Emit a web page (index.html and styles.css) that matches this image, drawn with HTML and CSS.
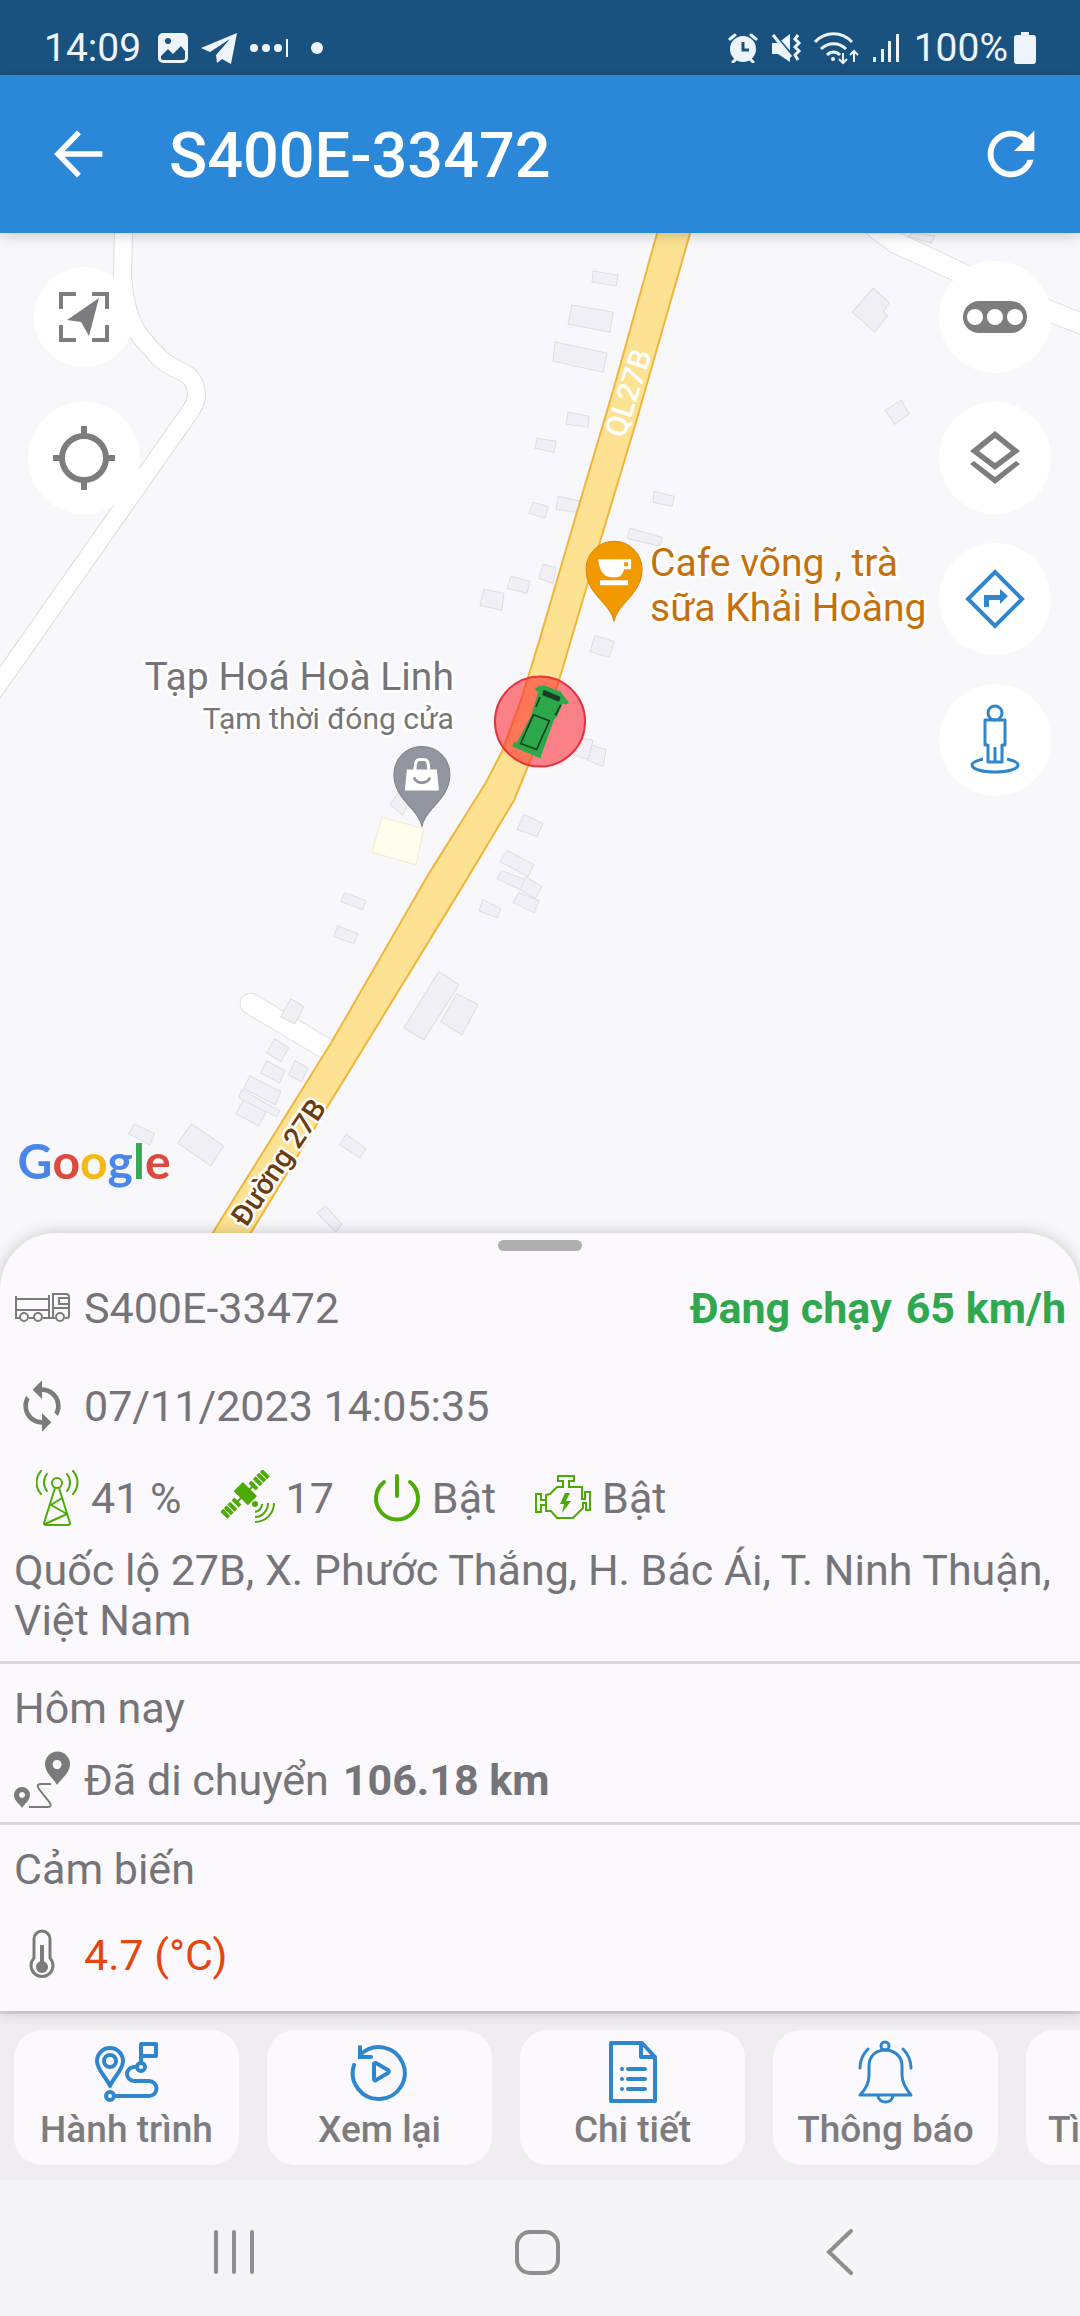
FILE: index.html
```html
<!DOCTYPE html>
<html lang="vi">
<head>
    <meta charset="UTF-8">
    <meta name="viewport" content="width=device-width, initial-scale=1.0">
    <title>S400E-33472</title>
    <link rel="stylesheet" href="styles.css">
</head>
<body>
    <div class="status-bar">
        <div class="status-group">
            <span class="status-time">14:09</span>
            <svg class="status-picture" width="32" height="32" viewBox="0 0 32 32">
                <rect x="1" y="1" width="30" height="30" rx="5" fill="#eef4fb"/>
                <circle cx="11" cy="9" r="3" fill="#1a527f"/>
                <path d="M4 24l7-7 5 5 8-8 4 5v7c0 1-1 2-2 2H6c-1 0-2-1-2-2z" fill="#1a527f"/>
            </svg>
            <svg width="36" height="32" viewBox="0 0 36 32">
                <path d="M0 16L36 1l-6 31-9-5-5 4-1-8 14-16L9 20z" fill="#eef4fb"/>
            </svg>
            <svg width="42" height="20" viewBox="0 0 42 20">
                <g fill="#eef4fb"><circle cx="5" cy="10" r="4"/><circle cx="17" cy="10" r="4"/><circle cx="29" cy="10" r="4"/><rect x="37" y="1" width="2" height="18"/></g>
            </svg>
            <span class="status-dot"></span>
        </div>
        <div class="status-group">
            <svg width="30" height="30" viewBox="0 0 30 30">
                <path d="M2 6l5-4M28 6l-5-4M5 29l4-4M25 29l-4-4" stroke="#eef4fb" stroke-width="3" stroke-linecap="round"/>
                <circle cx="15" cy="16" r="13" fill="#eef4fb"/>
                <path d="M15 9v8h6" fill="none" stroke="#1a527f" stroke-width="3"/>
            </svg>
            <svg width="32" height="32" viewBox="0 0 32 32">
                <path d="M2 11h6l12-9v28L8 22H2z" fill="#eef4fb"/>
                <path d="M2 0l24 28" stroke="#1a527f" stroke-width="3"/>
                <path d="M3 3l18 22" stroke="#eef4fb" stroke-width="3"/>
                <path d="M28 3l-3 4 4 4-4 4 4 4-4 4 3 5" fill="none" stroke="#eef4fb" stroke-width="3"/>
            </svg>
            <svg width="46" height="34" viewBox="0 0 46 34">
                <g fill="none" stroke="#eef4fb" stroke-width="3">
                    <path d="M1 11c10-11 27-11 37 0M7 18c7-7 18-7 25 0M13 24c4-4 9-4 13 0"/>
                    <path d="M29 22v10M25 28l4 4 4-4M40 31V20M36 24l4-4 4 4" stroke-width="2"/>
                </g>
                <circle cx="19" cy="28" r="2" fill="#eef4fb"/>
            </svg>
            <svg width="30" height="32" viewBox="0 0 30 32">
                <g fill="#eef4fb"><rect x="1" y="25" width="3" height="5"/><rect x="9" y="17" width="3" height="13"/><rect x="16" y="9" width="3" height="21"/><rect x="24" y="2" width="3" height="28"/></g>
            </svg>
            <span class="status-percent">100%</span>
            <svg width="22" height="34" viewBox="0 0 22 34">
                <path d="M7 1h8v3h4c2 0 3 1 3 3v23c0 2-1 3-3 3H3c-2 0-3-1-3-3V7c0-2 1-3 3-3h4z" fill="#eef4fb"/>
            </svg>
        </div>
    </div>

    <header class="app-bar">
        <button type="button" class="icon-button" aria-label="Quay lại">
            <svg width="70" height="70" viewBox="0 0 24 24">
                <path d="M20 12H5M12 4.600L4.800 12l7.200 7.400" fill="none" stroke="#fff" stroke-width="1.900"/>
            </svg>
        </button>
        <h1>S400E-33472</h1>
        <button type="button" class="icon-button" aria-label="Tải lại">
            <svg width="70" height="70" viewBox="0 0 24 24">
                <path d="M17.65 6.35C16.2 4.9 14.21 4 12 4c-4.42 0-7.99 3.58-7.99 8s3.57 8 7.99 8c3.73 0 6.84-2.55 7.73-6h-2.08c-.82 2.33-3.04 4-5.65 4-3.31 0-6-2.69-6-6s2.69-6 6-6c1.66 0 3.14.69 4.22 1.78L13 11h7V4l-2.35 2.35z" fill="#fff"/>
            </svg>
        </button>
    </header>

    <main class="map">
        <svg class="map-canvas" viewBox="0 233 1080 1055" preserveAspectRatio="xMidYMin slice">
            <!-- side roads -->
            <g fill="none" stroke-linecap="round">
                <path d="M124 220L123 275C124 300 130 322 142 338L160 358C172 370 190 370 195 385C199 396 196 403 190 412L-10 697" stroke="#dadce3" stroke-width="19"/>
                <path d="M124 220L123 275C124 300 130 322 142 338L160 358C172 370 190 370 195 385C199 396 196 403 190 412L-10 697" stroke="#fff" stroke-width="17"/>
                <path d="M251 1003L340 1056" stroke="#e0e2e8" stroke-width="22"/>
                <path d="M251 1003L340 1056" stroke="#fff" stroke-width="20"/>
            </g>
            <polygon points="865,233 890,252 951,280 1053,324 1082,335 1082,313 1050,300 970,266 900,233" fill="#fff" stroke="#dfe1e8"/>

            <!-- buildings -->
            <g fill="#f1f1f5" stroke="#dcdde3">
                <polygon points="593,271 618,275 616,286 592,282"/>
                <polygon points="572,305 613,312 610,332 568,324"/>
                <polygon points="555,342 607,353 603,372 553,361"/>
                <polygon points="568,412 589,416 588,427 566,424"/>
                <polygon points="537,438 556,441 554,452 535,448"/>
                <polygon points="558,496 580,501 578,512 556,509"/>
                <polygon points="533,502 548,506 545,518 529,513"/>
                <polygon points="654,491 674,496 672,506 653,502"/>
                <polygon points="630,528 662,537 660,546 627,538"/>
                <polygon points="543,564 556,567 553,583 539,578"/>
                <polygon points="511,576 530,581 527,593 507,588"/>
                <polygon points="484,589 504,593 502,610 480,605"/>
                <polygon points="595,635 614,641 609,657 590,651"/>
                <polygon points="582,738 593,740 588,759 573,754"/>
                <polygon points="592,745 606,749 603,766 588,760"/>
                <polygon points="873,288 889,303 883,311 887,316 874,332 852,312"/>
                <polygon points="901,400 909,414 894,424 885,410"/>
                <polygon points="912,233 935,236 931,243 908,237"/>
                <polygon points="399,792 411,796 403,815 390,804"/>
                <polygon points="524,814 543,823 537,836 517,829"/>
                <polygon points="507,850 534,864 528,876 500,861"/>
                <polygon points="502,870 525,879 520,889 497,878"/>
                <polygon points="526,876 542,886 535,898 520,889"/>
                <polygon points="519,892 539,900 534,912 513,902"/>
                <polygon points="483,899 501,908 497,917 479,910"/>
                <polygon points="345,892 366,900 363,909 341,901"/>
                <polygon points="338,925 358,933 354,943 334,936"/>
                <polygon points="439,971 459,984 424,1039 404,1027"/>
                <polygon points="457,993 478,1004 462,1034 441,1021"/>
                <polygon points="291,998 304,1006 295,1023 281,1016"/>
                <polygon points="275,1038 289,1047 281,1061 267,1052"/>
                <polygon points="267,1060 285,1070 280,1082 261,1072"/>
                <polygon points="295,1060 308,1067 302,1081 289,1074"/>
                <polygon points="250,1075 281,1091 276,1104 244,1088"/>
                <polygon points="244,1099 267,1110 259,1125 236,1113"/>
                <polygon points="242,1089 280,1110 277,1116 239,1097"/>
                <polygon points="192,1123 224,1145 211,1165 178,1142"/>
                <polygon points="135,1123 155,1133 150,1144 129,1133"/>
                <polygon points="346,1133 366,1148 360,1157 340,1144"/>
                <polygon points="326,1205 342,1223 336,1231 317,1212"/>
            </g>
            <polygon points="382,817 424,828 416,864 372,852" fill="#fffdee" stroke="#f3ecc4"/>

            <!-- highway -->
            <polygon points="662,216 657,233 614,387 576,515 540,638 521,700 502,751 486,782 429,873 332,1041 213,1232 176,1292 214,1292 251,1232 324,1112 463,885 514,800 528,766 559,680 598,548 635,425 690,233 695,216" fill="#fde293" stroke="#f0b63a" stroke-width="2"/>

            <text class="road-ref" transform="translate(638 396) rotate(-72)">QL27B</text>
            <text class="road-name" transform="translate(287 1167) rotate(-56)">Đường 27B</text>

            <text class="place closed" text-anchor="end" x="454" y="690">Tạp Hoá Hoà Linh</text>
            <text class="place-note closed" text-anchor="end" x="454" y="729">Tạm thời đóng cửa</text>
            <path d="M422 826c-3-18-28-27-28-52a28 28 0 0 1 56 0c0 25-25 34-28 52z" fill="#9196a0" stroke="#7d828c"/>
            <path d="M407 769h30l2 21h-34z" fill="#fff"/>
            <path d="M415 773c0-16 3-14 7-14s7-2 7 14" fill="none" stroke="#fff" stroke-width="3"/>
            <path d="M414 777c3 7 13 7 16 0" fill="none" stroke="#9196a0" stroke-width="3"/>

            <text class="place food" x="650" y="576">Cafe võng , trà</text>
            <text class="place food" x="650" y="621">sữa Khải Hoàng</text>
            <path d="M614 621c-3-18-28-27-28-52a28 28 0 0 1 56 0c0 25-25 34-28 52z" fill="#f29900" stroke="#d9890a"/>
            <path d="M598 559h33v10h-7c-1 5-4 8-8 8h-5c-8 0-12-9-13-18zM600 580h28v5h-28z" fill="#fff"/>
            <rect x="624" y="562" width="4" height="4" fill="#f29900"/>

            <!-- vehicle -->
            <circle cx="540" cy="721" r="45" fill="#ff1e28" fill-opacity=".55" stroke="#e8323c" stroke-width="2"/>
            <svg x="485" y="665" width="110" height="110" viewBox="0 0 330 330">
                <path d="M148 72L162 62 178 60 226 78 236 92 252 112 242 118 233 114 216 154 208 160 172 260 168 268 168 279 82 243 86 230 96 230 140 148 144 130 160 80z" fill="#2ba84a"/>
                <path d="M176 73L227 95 222 109 171 89z" fill="#1d3a22"/>
                <path d="M145 148L193 166 155 252 107 234zM165 95L153 124M227 118L211 150" fill="none" stroke="#123d1c" stroke-width="5"/>
            </svg>

            <text class="google" x="18" y="1178"><tspan fill="#4a86e8">G</tspan><tspan fill="#db4a3d">o</tspan><tspan fill="#f4b913">o</tspan><tspan fill="#4a86e8">g</tspan><tspan fill="#3aa757">l</tspan><tspan fill="#db4a3d">e</tspan></text>
        </svg>

        <div class="map-buttons">
            <button type="button" class="fab fab-small" aria-label="Bám theo xe">
                <svg width="64" height="64" viewBox="0 0 64 64">
                    <path d="M9 24V9h15M40 9h15v15M55 40v15H40M24 55H9V40" fill="none" stroke="#7d7d7f" stroke-width="4"/>
                    <path d="M47 13L15 35l14 2 8 14z" fill="#7d7d7f"/>
                </svg>
            </button>
            <button type="button" class="fab" aria-label="Vị trí của tôi">
                <svg width="64" height="64" viewBox="0 0 64 64">
                    <g fill="none" stroke="#7d7d7f" stroke-width="6"><circle cx="32" cy="32" r="22"/><path d="M32 0v9M32 55v9M1 32h8M55 32h8"/></g>
                </svg>
            </button>
        </div>
        <div class="map-buttons">
            <button type="button" class="fab" aria-label="Giao thông">
                <svg width="64" height="64" viewBox="0 0 64 64">
                    <rect x="0" y="16" width="64" height="32" rx="16" fill="#7d7d7f"/>
                    <g fill="#fff"><circle cx="12" cy="32" r="8"/><circle cx="32" cy="32" r="8"/><circle cx="52" cy="32" r="8"/></g>
                </svg>
            </button>
            <button type="button" class="fab" aria-label="Lớp bản đồ">
                <svg width="64" height="64" viewBox="0 0 64 64">
                    <path d="M32 5l25 20-25 19L7 25zM32 12L16 25l16 12 16-12zM7 38l4-3 21 16 21-16 4 3-25 20z" fill="#7d7d7f" fill-rule="evenodd"/>
                </svg>
            </button>
            <button type="button" class="fab" aria-label="Chỉ đường">
                <svg width="64" height="64" viewBox="0 0 64 64">
                    <path d="M32 5l27 27-27 27L5 32z" fill="none" stroke="#2f86cd" stroke-width="4"/>
                    <path d="M21 40V28h16v-6l8 7-8 8v-4H26v7z" fill="#2f86cd"/>
                </svg>
            </button>
            <button type="button" class="fab" aria-label="Chế độ xem phố">
                <svg width="64" height="72" viewBox="0 -4 64 72">
                    <g fill="none" stroke="#2f86cd" stroke-width="3" stroke-linejoin="round">
                        <circle cx="32" cy="5" r="7"/>
                        <path d="M22 12h20v25h-3v17H25V37h-3zM32 39v15"/>
                        <path d="M20 51c-8 2-11 4-11 6 0 4 10 7 23 7s23-3 23-7c0-2-3-4-11-6"/>
                    </g>
                </svg>
            </button>
        </div>
    </main>

    <section class="sheet">
        <div class="handle"></div>
        <div class="row">
            <span class="row-icon">
                <svg width="56" height="32" viewBox="0 0 56 32">
                    <g fill="none" stroke="#7b7a7d" stroke-width="2">
                        <path d="M2 4v22h4M15 26h5M29 26h12M51 26h2c1 0 2-1 2-2V5c0-2-1-3-3-3H39v24M2 7h33M2 18h33M35 3v23M54 6H45v6h9M39 16h15"/>
                        <circle cx="10" cy="25" r="4"/><circle cx="24" cy="25" r="4"/><circle cx="46" cy="25" r="4"/>
                    </g>
                </svg>
            </span>
            <span>S400E-33472</span>
            <strong class="speed"><span>Đang chạy</span> <span>65 km/h</span></strong>
        </div>
        <div class="row row-time">
            <span class="row-icon">
                <svg width="56" height="56" viewBox="0 0 24 24">
                    <path d="M12 4V1L8 5l4 4V6c3.31 0 6 2.69 6 6 0 1.01-.25 1.97-.7 2.8l1.46 1.46C19.54 15.03 20 13.57 20 12c0-4.42-3.58-8-8-8zm0 14c-3.31 0-6-2.69-6-6 0-1.01.25-1.97.7-2.8L5.24 7.74C4.46 8.97 4 10.43 4 12c0 4.42 3.58 8 8 8v3l4-4-4-4v3z" fill="#7b7a7d"/>
                </svg>
            </span>
            <span>07/11/2023 14:05:35</span>
        </div>
        <div class="signals">
            <div class="signal">
                <svg width="44" height="58" viewBox="0 0 44 58">
                    <g fill="none" stroke="#4cab05" stroke-width="2" stroke-linecap="round" stroke-linejoin="round">
                        <circle cx="21" cy="14" r="5"/>
                        <path d="M19 19L8 54c0 1 0 2 2 2h22c2 0 2-1 2-2L23 19M26 29l-11 7 16 9-22 10"/>
                        <path d="M11 5c-4 5-4 12 0 17M5 2c-6 7-6 16 0 23M31 5c4 5 4 12 0 17M37 2c6 7 6 16 0 23"/>
                    </g>
                </svg>
                <span>41 %</span>
            </div>
            <div class="signal">
                <svg width="54" height="56" viewBox="0 0 54 56">
                    <g transform="translate(24 24) rotate(-45)" fill="#4cab05">
                        <rect x="-6" y="-10" width="13" height="20"/>
                        <rect x="-12" y="-1" width="24" height="2"/>
                        <path d="M10-5h4V5h-4zM16-5h4V5h-4zM21-5h4V5h-4zM26-5h4V5h-4zM-14-5h4V5h-4zM-20-5h4V5h-4zM-25-5h4V5h-4zM-30-5h4V5h-4z"/>
                    </g>
                    <circle cx="34" cy="34" r="3" fill="#4cab05"/>
                    <path d="M41 34c0 4-3 7-7 8M47 33c0 8-6 14-13 14M53 33c0 11-9 19-19 19" fill="none" stroke="#4cab05" stroke-width="2"/>
                </svg>
                <span>17</span>
            </div>
            <div class="signal">
                <svg width="48" height="48" viewBox="0 0 48 48">
                    <path d="M11 8a21 21 0 1 0 26 0M24 2v20" fill="none" stroke="#4cab05" stroke-width="4" stroke-linecap="round"/>
                </svg>
                <span>Bật</span>
            </div>
            <div class="signal">
                <svg width="56" height="48" viewBox="1 0 56 48">
                    <path d="M24 2h16v5h-5v6h13v12h3v-7h5v18h-4v-7h-3v5L39 44H23l-6-7h-5V21l4-1 7-7h6V7h-5zM12 26H7v-6H2v18h5v-7h5" fill="none" stroke="#4cab05" stroke-width="2"/>
                    <path d="M31 19l-5 11h4l-2 9 9-12h-5l4-8z" fill="#4cab05"/>
                </svg>
                <span>Bật</span>
            </div>
        </div>
        <p class="address">Quốc lộ 27B, X. Phước Thắng, H. Bác Ái, T. Ninh Thuận, Việt Nam</p>

        <div class="panel">
            <h2>Hôm nay</h2>
            <div class="row row-distance">
                <span class="row-icon">
                    <svg width="56" height="58" viewBox="0 0 56 58">
                        <path d="M43 34C40 28 31 22 31 13a12 12 0 0 1 25 0c0 9-9 15-13 21zM43 9a4.500 4.500 0 1 0 .1 0zM8 57C6 53 0 50 0 44a8 8 0 0 1 16 0c0 6-6 9-8 13zM8 41a3 3 0 1 0 .1 0z" fill="#7b7a7d" fill-rule="evenodd"/>
                        <path d="M37 33H27c-4 0-4 2-2 5l11 14c1 2 1 4-2 4H15" fill="none" stroke="#7b7a7d" stroke-width="2"/>
                    </svg>
                </span>
                <span>Đã di chuyển</span>
                <strong>106.18 km</strong>
            </div>
        </div>

        <div class="panel panel-sensor">
            <h2>Cảm biến</h2>
            <div class="row row-sensor">
                <span class="row-icon">
                    <svg width="28" height="52" viewBox="0 0 28 52">
                        <path d="M6 29V10a8 8 0 0 1 16 0v19a11 11 0 1 1-16 0z" fill="none" stroke="#7b7a7d" stroke-width="3"/>
                        <path d="M14 16v22" stroke="#7b7a7d" stroke-width="4"/>
                        <circle cx="14" cy="38" r="6" fill="#7b7a7d"/>
                    </svg>
                </span>
                <span class="temperature">4.7 (°C)</span>
            </div>
        </div>
    </section>

    <nav class="actions">
        <button type="button" class="action">
            <svg width="64" height="64" viewBox="0 0 64 64">
                <g fill="none" stroke="#2f86cd" stroke-width="4" stroke-linejoin="round">
                    <path d="M15 46C12 38 2 30 2 21a13 13 0 0 1 26 0c0 9-10 17-13 25z"/>
                    <circle cx="15" cy="21" r="6"/>
                    <path d="M41 27h-2a7 7 0 0 0 0 14h15a7 7 0 0 1 0 15H20M46 22V4h15v12H46"/>
                    <circle cx="15" cy="56" r="4"/><circle cx="46" cy="27" r="4"/>
                </g>
            </svg>
            <span>Hành trình</span>
        </button>
        <button type="button" class="action">
            <svg width="64" height="64" viewBox="0 0 64 64">
                <path d="M6 25A26 26 0 1 0 13 14M12 7v10h11M26 24c0-1 1-1 2-1l12 7c1 1 1 2 0 3l-12 7c-1 1-2 0-2-1z" fill="none" stroke="#2f86cd" stroke-width="4" stroke-linecap="round"/>
            </svg>
            <span>Xem lại</span>
        </button>
        <button type="button" class="action">
            <svg width="64" height="64" viewBox="0 0 64 64">
                <g fill="none" stroke="#2f86cd" stroke-width="4" stroke-linecap="round" stroke-linejoin="round">
                    <path d="M10 3h31l13 14v44H10zM40 3v14h13M21 29h0M27 29h17M21 39h0M27 39h17M21 49h0M27 49h17"/>
                </g>
            </svg>
            <span>Chi tiết</span>
        </button>
        <button type="button" class="action">
            <svg width="64" height="64" viewBox="0 0 64 64">
                <g fill="none" stroke="#2f86cd" stroke-width="3" stroke-linecap="round" stroke-linejoin="round">
                    <path d="M6 55c6-6 9-12 9-20v-9c0-10 7-16 16-16s17 6 17 16v9c0 8 4 14 9 20zM24 56c1 8 14 8 15 0"/>
                    <circle cx="31" cy="6" r="4"/>
                    <path d="M14 9c-5 5-8 12-8 19M49 9c5 5 8 12 8 19"/>
                </g>
            </svg>
            <span>Thông báo</span>
        </button>
        <button type="button" class="action action-text">
            <span>Tình trạng</span>
        </button>
    </nav>

    <div class="nav-bar">
        <button type="button" aria-label="Gần đây">
            <svg width="48" height="48" viewBox="0 0 48 48">
                <path d="M6 4v40M24 4v40M42 4v40" stroke="#8e8d91" stroke-width="4" stroke-linecap="round"/>
            </svg>
        </button>
        <button type="button" aria-label="Màn hình chính">
            <svg width="48" height="48" viewBox="0 0 48 48">
                <rect x="3" y="4" width="41" height="41" rx="13" fill="none" stroke="#8e8d91" stroke-width="4"/>
            </svg>
        </button>
        <button type="button" aria-label="Trở về">
            <svg width="48" height="48" viewBox="0 0 48 48">
                <path d="M33 3L11 24l22 21" fill="none" stroke="#8e8d91" stroke-width="4" stroke-linecap="round"/>
            </svg>
        </button>
    </div>
</body>
</html>
```
FILE: styles.css
```css
* {
    box-sizing: border-box;
}
body {
    margin: 0;
    min-height: 100vh;
    display: flex;
    flex-direction: column;
    overflow-x: hidden;
    background-color: #fbf9fd;
    color: #757478;
    font-family: Roboto, "Noto Sans", sans-serif;
    font-size: 43px;
    line-height: 50px;
}
button {
    padding: 0;
    border: none;
    background: none;
    color: inherit;
    font-family: inherit;
    cursor: pointer;
}
svg {
    display: block;
    flex-shrink: 0;
}

/* Status bar */
.status-bar {
    display: flex;
    justify-content: space-between;
    height: 75px;
    padding: 22px 44px 0;
    background-color: #1a527f;
    color: #eef4fb;
    font-size: 39px;
    line-height: 52px;
}
.status-group {
    display: flex;
    align-items: center;
    gap: 12px;
    height: 52px;
}
.status-picture {
    margin-left: 4px;
}
.status-dot {
    width: 12px;
    height: 12px;
    margin-left: 8px;
    border-radius: 50%;
    background-color: #eef4fb;
}
.status-percent {
    margin-right: -6px;
}

/* App bar */
.app-bar {
    position: relative;
    z-index: 1;
    display: flex;
    align-items: center;
    height: 158px;
    padding: 0 34px 0 44px;
    background-color: #2b88d8;
    box-shadow: 0 2px 14px rgba(0, 0, 0, 0.2);
    color: #fff;
}
.app-bar h1 {
    flex: 1;
    margin: 0;
    padding: 4px 0 0 55px;
    font-size: 63px;
    font-weight: 500;
    line-height: 74px;
}

/* Map */
.map {
    position: relative;
    flex: 1;
    min-height: 600px;
    display: flex;
    justify-content: space-between;
    padding: 28px 29px 0 28px;
    background-color: #f8f8fc;
}
.map-canvas {
    position: absolute;
    top: 0;
    left: 0;
    width: 100%;
    height: 100%;
}
.map-canvas text {
    paint-order: stroke;
    stroke: #fff;
    stroke-width: 5px;
    stroke-linejoin: round;
}
.place {
    font-size: 39px;
}
.place-note {
    font-size: 30px;
}
.closed {
    fill: #757579;
}
.food {
    fill: #c5700e;
}
.map-canvas .road-ref {
    fill: #fff;
    stroke: none;
    font-size: 30px;
    font-weight: 500;
    text-anchor: middle;
}
.road-name {
    fill: #6b3c10;
    font-size: 29px;
    font-weight: 500;
    text-anchor: middle;
}
.map-canvas .google {
    stroke: none;
    font-family: Lato, sans-serif;
    font-size: 48px;
    font-weight: 700;
}
.map-buttons {
    position: relative;
    display: flex;
    flex-direction: column;
    gap: 29px;
}
.fab {
    display: flex;
    align-items: center;
    justify-content: center;
    width: 112px;
    height: 112px;
    border-radius: 50%;
    background-color: #fff;
}
.fab-small {
    width: 100px;
    height: 100px;
    margin: 6px;
}

/* Bottom sheet */
.sheet {
    position: relative;
    margin-top: -56px;
    padding-top: 7px;
    border-radius: 56px 56px 0 0;
    background-color: #fbf9fd;
    box-shadow: 0 0 16px rgba(0, 0, 0, 0.2);
}
.handle {
    width: 84px;
    height: 11px;
    margin: 0 auto 32px;
    border-radius: 6px;
    background-color: #afafaf;
}
.row {
    display: flex;
    align-items: center;
    gap: 14px;
    height: 50px;
    padding: 0 14px;
}
.row-icon {
    display: flex;
    justify-content: center;
    width: 56px;
}
.speed {
    display: flex;
    gap: 14px;
    margin-left: auto;
    color: #2fa84f;
}
.row-time {
    margin-top: 48px;
}
.signals {
    display: flex;
    gap: 39px;
    margin-top: 38px;
    padding: 0 36px;
}
.signal {
    display: flex;
    align-items: center;
    gap: 11px;
    height: 58px;
}
.address {
    margin: 18px 0 0;
    padding: 0 14px 16px;
}
.panel {
    padding: 19px 0 14px;
    border-top: 3px solid #d8d7da;
}
.panel h2 {
    margin: 0;
    padding: 0 14px;
    font-size: 43px;
    font-weight: 400;
}
.row-distance {
    height: 56px;
    margin-top: 19px;
}
.panel-sensor {
    padding-bottom: 31px;
}
.row-sensor {
    margin-top: 36px;
}
.temperature {
    color: #e3460f;
}

/* Action buttons */
.actions {
    display: flex;
    gap: 28px;
    padding: 16px 14px 15px;
    overflow: hidden;
    border-top: 3px solid #d8d7da;
    background-color: #efedf0;
}
.action {
    display: flex;
    flex: 0 0 225px;
    flex-direction: column;
    align-items: center;
    gap: 4px;
    height: 135px;
    padding-top: 10px;
    border-radius: 28px;
    background-color: #fbf9fd;
    color: #7d7c7f;
    font-size: 37px;
    font-weight: 500;
    line-height: 44px;
    white-space: nowrap;
}
.action-text {
    align-items: flex-start;
    padding: 78px 0 0 22px;
}

/* System navigation */
.nav-bar {
    position: relative;
    display: flex;
    height: 136px;
    padding: 8px 86px 0 82px;
    background-color: #f5f4f8;
}
.nav-bar button {
    display: flex;
    flex: 1;
    align-items: center;
    justify-content: center;
}
```
